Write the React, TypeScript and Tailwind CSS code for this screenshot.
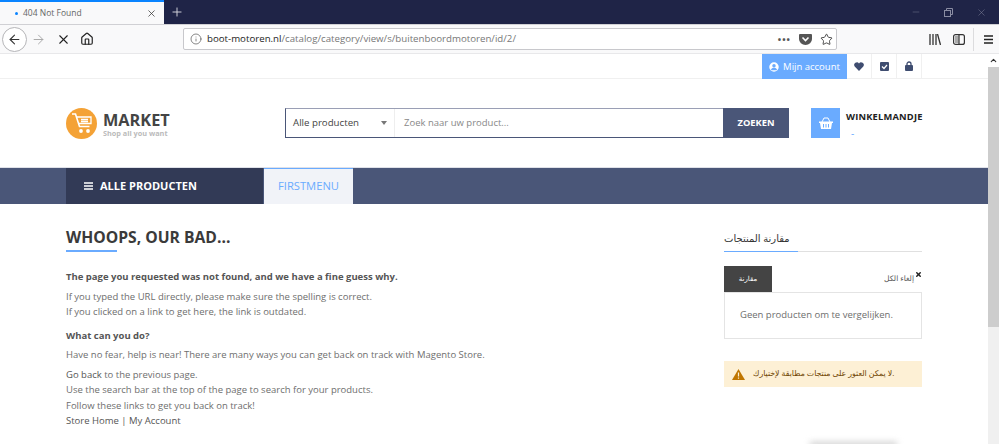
import React from "react";
import { ArrowLeft, ArrowRight, X, Home, Info, Star, Plus, Minus, ChevronUp } from "lucide-react";

const Tab = () => (
  <div className="flex h-[24px] bg-[#1f2447] overflow-hidden">
    <div className="w-[164px] h-full bg-[#f9f9fa] border-t-2 border-[#0a84ff] flex items-center pl-[15px] pr-[7px]">
      <span className="w-[3px] h-[3px] rounded-full bg-[#0a84ff]" />
      <span className="ml-[5px] text-[8.500px] text-[#666] flex-1">404 Not Found</span>
      <X size={11} strokeWidth={1.6} className="text-[#333]" />
    </div>
    <div className="w-[25px] flex items-center justify-center">
      <Plus size={14} strokeWidth={1.6} className="text-[#d8d8e0]" />
    </div>
    <div className="flex-1" />
    <div className="w-[100px] flex items-center text-[#8a8da3]">
      <div className="w-[33px] flex justify-center"><Minus size={10} strokeWidth={1} /></div>
      <div className="w-[33px] flex justify-center">
        <svg width="9" height="9" viewBox="0 0 9 9" fill="none" stroke="currentColor"><rect x="0.5" y="2.5" width="6" height="6" /><path d="M2.500 2.500V.5h6v6h-2" /></svg>
      </div>
      <div className="w-[33px] flex justify-center"><X size={11} strokeWidth={1} /></div>
    </div>
  </div>
);

const Toolbar = () => (
  <div className="h-[30px] bg-[#f9f9fa] border-t border-[#d0d0d4] border-b border-b-[#e8e8ea] flex items-center relative">
    <div className="w-[182px] flex items-center pl-[2px] shrink-0">
      <div className="w-[25px] h-[25px] rounded-full border border-[#b5b5b8] bg-white flex items-center justify-center">
        <ArrowLeft size={15} strokeWidth={1.7} className="text-[#333]" />
      </div>
      <ArrowRight size={15} strokeWidth={1.6} className="text-[#aaa] ml-[4px]" />
      <X size={15} strokeWidth={1.7} className="text-[#222] ml-[10px]" />
      <Home size={14} strokeWidth={2} className="text-[#222] ml-[9px]" />
    </div>
    <div className="w-[654px] ml-[1px] h-[22px] bg-white border border-[#c8c8cc] rounded-[2px] flex items-center pl-[6px] pr-[3px] shrink-0">
      <Info size={12} strokeWidth={1.4} className="text-[#555]" />
      <span className="ml-[5px] text-[9.700px] text-[#1c1c1c] whitespace-nowrap">boot-motoren.nl<span className="text-[#777]">/catalog/category/view/s/buitenboordmotoren/id/2/</span></span>
      <span className="flex-1" />
      <span className="text-[#555] text-[9px] font-bold tracking-[1px] leading-none mr-[8px]">•••</span>
      <svg width="13" height="11" viewBox="0 0 13 11" className="text-[#555]"><path d="M1 0h11a1 1 0 0 1 1 1v4a6.500 6 0 0 1-13 0V1a1 1 0 0 1 1-1z" fill="currentColor" /><path d="M3.500 3.500 6.500 6.500 9.500 3.500" stroke="#fff" strokeWidth="1.600" fill="none" /></svg>
      <Star size={13} strokeWidth={1.6} className="text-[#333] ml-[8px]" />
    </div>
    <div className="ml-[92px] flex items-center">
      <svg width="12" height="11" viewBox="0 0 12 11" stroke="#333" strokeWidth="1.300" fill="none"><path d="M1 0v11M4 0v11M7 0v11M8.500 0l3 11" /></svg>
      <svg className="ml-[12px]" width="12" height="11" viewBox="0 0 12 11" fill="none" stroke="#333" strokeWidth="1.200"><rect x="0.600" y="0.600" width="10.800" height="9.800" rx="2" /><rect x="2" y="2" width="3.500" height="7" fill="#aaa" stroke="none" /><path d="M6 1v9" /></svg>
      <div className="w-px h-[23px] bg-[#dcdcde] ml-[8px]" />
      <svg className="ml-[10px]" width="9" height="9" viewBox="0 0 9 9" stroke="#222" strokeWidth="1.300"><path d="M0 1h9M0 4.500h9M0 8h9" /></svg>
    </div>
  </div>
);

const TopBar = () => (
  <div className="h-[25px] border-b border-[#f0f0f0] flex justify-end pr-[66px]">
    <div className="w-[85px] h-[25px] bg-[#6aabff] flex items-center justify-center gap-[4px] text-white text-[9.500px]">
      <svg width="10" height="10" viewBox="0 0 11 11"><circle cx="5.500" cy="5.500" r="5.200" fill="#fff" /><circle cx="5.500" cy="4.200" r="1.900" fill="#6aabff" /><path d="M2 9c.5-2 2-2.600 3.500-2.600S8.500 7 9 9" fill="#6aabff" /></svg>
      <span className="pt-px">Mijn account</span>
    </div>
    <div className="w-[25px] flex items-center justify-center border-r border-[#f0f0f0]">
      <svg width="10" height="9" viewBox="0 0 10 9"><path d="M5 9 .7 4.500A2.500 2.500 0 0 1 5 1.500 2.500 2.500 0 0 1 9.300 4.500z" fill="#3f4d70" /></svg>
    </div>
    <div className="w-[25px] flex items-center justify-center border-r border-[#f0f0f0]">
      <svg width="9" height="9" viewBox="0 0 9 9"><rect width="9" height="9" rx="1" fill="#3f4d70" /><path d="M2 4.500 4 6.500 7 3" stroke="#fff" strokeWidth="1.200" fill="none" /></svg>
    </div>
    <div className="w-[25px] flex items-center justify-center border-r border-[#f0f0f0]">
      <svg width="8" height="10" viewBox="0 0 8 10"><path d="M2 4.500V3a2 2 0 0 1 4 0v1.500" stroke="#3f4d70" strokeWidth="1.300" fill="none" /><rect y="4" width="8" height="6" rx="1" fill="#3f4d70" /></svg>
    </div>
  </div>
);

const Header = () => (
  <div className="h-[88px] pl-[66px] pt-[29px] flex items-start">
    <div className="w-[219px] shrink-0 flex items-start">
      <svg width="31" height="31" viewBox="0 0 31 31" className="shrink-0">
        <circle cx="15.500" cy="15.500" r="15.500" fill="#f4a236" />
        <path d="M6 6h3.500l4 12.500h10" stroke="#fff" strokeWidth="1.600" fill="none" />
        <path d="M11 9h14v6.500H13M15 11.500h7M15 13.500h7" stroke="#fff" strokeWidth="1.300" fill="none" />
        <circle cx="15" cy="23" r="1.900" fill="#fff" /><circle cx="22" cy="23" r="1.900" fill="#fff" />
      </svg>
      <div className="ml-[6px]">
        <div className="text-[16.300px] leading-[16px] mt-[4px] font-bold text-[#444]">MARKET</div>
        <div className="text-[7.300px] leading-[9px] mt-[0.500px] font-bold text-[#bbb] whitespace-nowrap">Shop all you want</div>
      </div>
    </div>
    <div className="w-[504px] h-[30px] shrink-0 flex border border-[#4a5678] border-t-[#9a9fb5]">
      <div className="w-[109px] border-r border-[#eee] flex items-center pl-[7px] text-[9.700px] text-[#444]">
        <span className="pt-px">Alle producten</span>
        <span className="ml-[22px] w-0 h-0 border-x-[3px] border-x-transparent border-t-[4px] border-t-[#777]" />
      </div>
      <div className="flex-1 flex items-center pl-[9px] text-[9.500px] text-[#888]">Zoek naar uw product...</div>
      <div className="w-[66px] bg-[#4a5678] flex items-center justify-center text-white text-[9.300px] font-bold -my-px -mr-px">ZOEKEN</div>
    </div>
    <div className="ml-[22px] w-[29px] h-[30px] shrink-0 bg-[#6aabff] flex items-center justify-center">
      <svg width="14" height="12" viewBox="0 0 14 12"><path d="M3 5 5 1h4l2 4" stroke="#fff" strokeWidth="1" fill="none" /><path d="M0 4.500h14v1.500h-1l-1 6H2L1 6H0z" fill="#fff" /><path d="M4.500 7v3.500M7 7v3.500M9.500 7v3.500" stroke="#6aabff" /></svg>
    </div>
    <div className="ml-[6px]">
      <div className="text-[9.300px] leading-[12px] mt-[3px] font-bold text-[#222] tracking-[0.2px] whitespace-nowrap">WINKELMANDJE</div>
      <div className="text-[10px] leading-[12px] mt-[4px] pl-[5px] text-[#6aabff]">-</div>
    </div>
  </div>
);

const Nav = () => (
  <div className="h-[37px] bg-[#4a5678] border-t border-[#dfe1e8] pl-[66px] flex">
    <div className="w-[197px] bg-[#323a56] flex items-center pl-[18px] gap-[7px] text-white text-[11px] font-bold">
      <svg width="9" height="8" viewBox="0 0 9 8" stroke="#fff" strokeWidth="1.400"><path d="M0 1h9M0 4h9M0 7h9" /></svg>
      ALLE PRODUCTEN
    </div>
    <div className="w-[89px] ml-px bg-[#f1f3f8] border-t border-[#6aabff] flex items-center justify-center text-[#6aabff] text-[11.200px]">FIRSTMENU</div>
  </div>
);

const Main = () => (
  <div className="px-[66px] flex justify-between">
    <div className="pt-[23px] text-[9.500px] leading-[15.500px] text-[#6e6e6e]">
      <h1 className="text-[15.700px] leading-[20px] font-bold text-[#3a3a3a]">WHOOPS, OUR BAD...</h1>
      <div className="w-[51px] h-[2px] bg-[#6aabff] mt-[3px]" />
      <p className="mt-[17px] font-bold text-[#555]">The page you requested was not found, and we have a fine guess why.</p>
      <p className="mt-[4px]">If you typed the URL directly, please make sure the spelling is correct.</p>
      <p>If you clicked on a link to get here, the link is outdated.</p>
      <p className="mt-[8px] font-bold text-[#555]">What can you do?</p>
      <p className="mt-[4px]">Have no fear, help is near! There are many ways you can get back on track with Magento Store.</p>
      <p className="mt-[4px]"><span className="text-[#555]">Go back</span> to the previous page.</p>
      <p>Use the search bar at the top of the page to search for your products.</p>
      <p>Follow these links to get you back on track!</p>
      <p className="text-[#555]">Store Home | My Account</p>
    </div>
    <div className="w-[198px] pt-[26px]">
      <div className="border-b border-[#e0e0e0] relative h-[22px] flex justify-start items-start">
        <span className="text-[10px] leading-[16px] text-[#333]">مقارنة المنتجات</span>
        <div className="absolute left-0 -bottom-px w-[74px] h-px bg-[#6aabff]" />
      </div>
      <div className="mt-[14px] h-[26px] flex justify-between">
        <div className="w-[48px] bg-[#444] flex items-center justify-center text-white text-[7px]">مقارنة</div>
        <div className="flex items-start text-[7.500px] text-[#555] pt-[5px]">
          <span className="mt-[2px]">إلغاء الكل</span>
          <X size={7} strokeWidth={5} className="text-[#222] ml-px" />
        </div>
      </div>
      <div className="h-[47px] border border-[#e4e4e4] flex items-center pl-[15px] text-[9.500px] text-[#6e6e6e]">Geen producten om te vergelijken.</div>
      <div className="mt-[22px] h-[26px] bg-[#fdf0d5] flex items-center pl-[8px] gap-[8px]">
        <svg width="13" height="11" viewBox="0 0 13 11"><path d="M6.500 0 13 11H0z" fill="#c07600" /><path d="M6.500 3.500v4M6.500 8.500v1.200" stroke="#fdf0d5" strokeWidth="1.200" /></svg>
        <span className="text-[7.800px] text-[#6f4400] whitespace-nowrap">لا يمكن العثور على منتجات مطابقة لإختيارك.</span>
      </div>
    </div>
  </div>
);

export default function App() {
  return (
    <div className="w-[999px] h-[444px] overflow-hidden bg-white relative font-['Open_Sans','DejaVu_Sans',sans-serif]">
      <Tab />
      <Toolbar />
      <div className="flex h-[390px]">
        <div className="flex-1 min-w-0">
          <TopBar />
          <Header />
          <Nav />
          <Main />
        </div>
        <div className="w-[11px] bg-[#f0f0f0] flex flex-col shrink-0">
          <div className="h-[13px] bg-white flex items-center justify-center"><ChevronUp size={9} strokeWidth={3} className="text-[#333]" /></div>
          <div className="h-[260px] bg-[#cdcdcd]" />
        </div>
      </div>
      <div className="absolute left-[810px] -bottom-[3px] w-[87px] h-[5px] bg-[#cccccc] blur-[3px]" />
    </div>
  );
}
